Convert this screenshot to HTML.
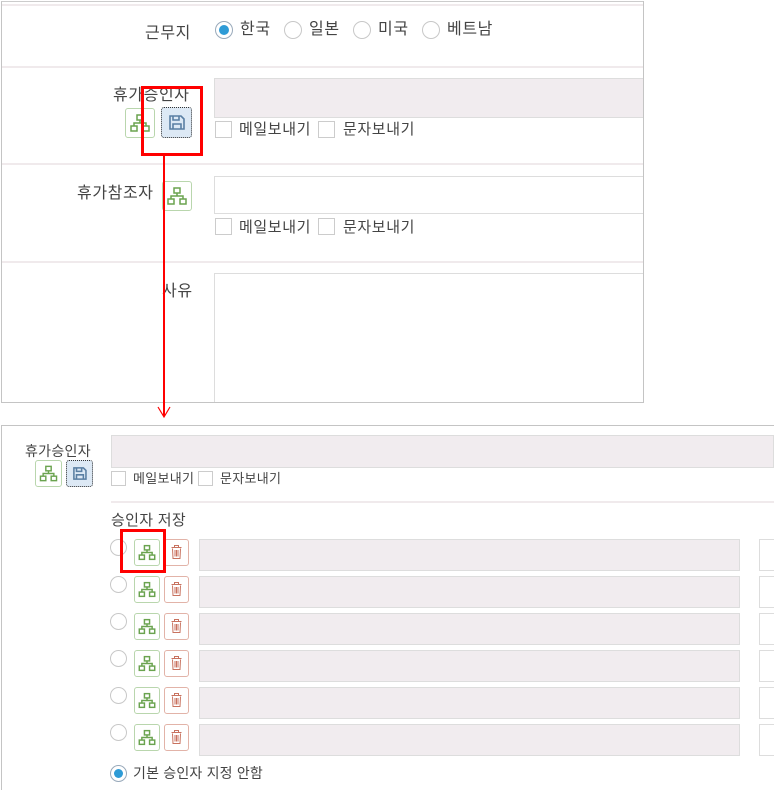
<!DOCTYPE html>
<html><head><meta charset="utf-8"><style>
*{box-sizing:border-box;margin:0;padding:0}
body{width:774px;height:790px;background:#fff;position:relative;overflow:hidden;font-family:"Liberation Sans","Noto Sans CJK KR","NanumGothic",sans-serif;color:#444}
.a{position:absolute}
.t{position:absolute;white-space:nowrap;line-height:1}
.inp{position:absolute;background:#f1ecef;border:1px solid #ddd}
.inpw{position:absolute;background:#fff;border:1px solid #ddd}
.hl{position:absolute;height:2px;background:#f0eaec}
.rad{position:absolute;border:1px solid #c8c8c8;border-radius:50%;background:#fff}
.chk{position:absolute;border:1px solid #ccc;background:#fff}
.gb{position:absolute;border:1px solid #b9d6ad;border-radius:3px;background:#fff}
.rb{position:absolute;border:1px solid #e2b3a8;border-radius:3px;background:#fff}
.sb{position:absolute;border:1px dotted #333;border-radius:3px;background:#dde9f5}
svg{position:absolute;left:0;top:0}
.f16{font-size:16px;letter-spacing:0.6px}
</style></head><body>
<div class="a" style="left:1px;top:1px;width:643px;height:402px;border:1px solid #c4c4c4;border-top:1px solid #ccc;overflow:hidden"></div>
<div class="hl" style="left:2px;top:4px;width:641px"></div>
<div class="t f16" style="left:145px;top:26px">근무지</div>
<div class="rad" style="left:215px;top:21px;width:18px;height:18px;border-color:#9ab"><div class="a" style="left:3px;top:3px;width:10px;height:10px;border-radius:50%;background:#2e9bd6"></div></div>
<div class="t f16" style="left:240px;top:22px">한국</div>
<div class="rad" style="left:284px;top:21px;width:18px;height:18px"></div>
<div class="t f16" style="left:309px;top:22px">일본</div>
<div class="rad" style="left:353px;top:21px;width:18px;height:18px"></div>
<div class="t f16" style="left:378px;top:22px">미국</div>
<div class="rad" style="left:422px;top:21px;width:18px;height:18px"></div>
<div class="t f16" style="left:447px;top:22px">베트남</div>
<div class="hl" style="left:2px;top:66px;width:641px"></div>
<div class="t f16" style="left:113px;top:88px">휴가승인자</div>
<div class="inp" style="left:214px;top:78px;width:430px;height:40px"></div>
<div class="gb" style="left:125px;top:108px;width:30px;height:30px"><svg width="28" height="28" viewBox="0 0 28 28"><g fill="none" stroke="#6aa34f" stroke-width="1.5"><rect x="11" y="6" width="6" height="5"/><path d="M14 11v3M8 17v-3h12v3"/><rect x="5" y="17" width="6" height="5"/><rect x="17" y="17" width="6" height="5"/></g></svg></div>
<div class="sb" style="left:161px;top:107px;width:31px;height:31px"><svg width="29" height="29" viewBox="0 0 29 29"><g fill="none" stroke="#5a7fa3" stroke-width="1.6"><path d="M8 8h11l3 3v10H8z"/><path d="M11 8v4h6V8M11 21v-5h8v5"/></g></svg></div>
<div class="chk" style="left:215px;top:121px;width:17px;height:17px"></div>
<div class="t f16" style="left:239px;top:122px;font-size:15px">메일보내기</div>
<div class="chk" style="left:318px;top:121px;width:17px;height:17px"></div>
<div class="t f16" style="left:343px;top:122px;font-size:15px">문자보내기</div>
<div class="hl" style="left:2px;top:163px;width:641px"></div>
<div class="t f16" style="left:77px;top:186px">휴가참조자</div>
<div class="gb" style="left:162px;top:181px;width:30px;height:30px"><svg width="28" height="28" viewBox="0 0 28 28"><g fill="none" stroke="#6aa34f" stroke-width="1.5"><rect x="11" y="6" width="6" height="5"/><path d="M14 11v3M8 17v-3h12v3"/><rect x="5" y="17" width="6" height="5"/><rect x="17" y="17" width="6" height="5"/></g></svg></div>
<div class="inpw" style="left:214px;top:176px;width:430px;height:38px"></div>
<div class="chk" style="left:215px;top:218px;width:17px;height:17px"></div>
<div class="t f16" style="left:239px;top:220px;font-size:15px">메일보내기</div>
<div class="chk" style="left:318px;top:218px;width:17px;height:17px"></div>
<div class="t f16" style="left:343px;top:220px;font-size:15px">문자보내기</div>
<div class="hl" style="left:2px;top:261px;width:641px"></div>
<div class="t f16" style="left:162px;top:284px">사유</div>
<div class="inpw" style="left:214px;top:273px;width:430px;height:130px"></div>
<div class="a" style="left:1px;top:402px;width:643px;height:1px;background:#c4c4c4"></div>
<div class="a" style="left:643px;top:1px;width:1px;height:402px;background:#c4c4c4"></div>
<div class="a" style="left:141px;top:86px;width:62px;height:70px;border:3px solid #f00"></div>
<div class="a" style="left:163px;top:156px;width:2px;height:260px;background:#f00"></div>
<svg class="a" style="left:156px;top:405px" width="16" height="14"><path d="M2 2l6 10 6-10" fill="none" stroke="#f00" stroke-width="1.2"/></svg>
<div class="a" style="left:1px;top:425px;width:773px;height:1px;background:#c4c4c4"></div>
<div class="a" style="left:1px;top:425px;width:1px;height:365px;background:#c4c4c4"></div>
<div class="t" style="left:25px;top:444px;font-size:14px;letter-spacing:0.3px">휴가승인자</div>
<div class="gb" style="left:35px;top:460px;width:27px;height:27px"><svg width="25" height="25" viewBox="0 0 28 28"><g fill="none" stroke="#6aa34f" stroke-width="1.6"><rect x="11" y="6" width="6" height="5"/><path d="M14 11v3M8 17v-3h12v3"/><rect x="5" y="17" width="6" height="5"/><rect x="17" y="17" width="6" height="5"/></g></svg></div>
<div class="sb" style="left:66px;top:460px;width:27px;height:27px"><svg width="25" height="25" viewBox="0 0 29 29"><g fill="none" stroke="#5a7fa3" stroke-width="1.8"><path d="M8 8h11l3 3v10H8z"/><path d="M11 8v4h6V8M11 21v-5h8v5"/></g></svg></div>
<div class="inp" style="left:111px;top:435px;width:663px;height:33px"></div>
<div class="chk" style="left:111px;top:471px;width:15px;height:15px"></div>
<div class="t" style="left:133px;top:472px;font-size:13px;letter-spacing:0.3px">메일보내기</div>
<div class="chk" style="left:198px;top:471px;width:15px;height:15px"></div>
<div class="t" style="left:220px;top:472px;font-size:13px;letter-spacing:0.3px">문자보내기</div>
<div class="hl" style="left:111px;top:501px;width:663px"></div>
<div class="t" style="left:111px;top:513px;font-size:15px;letter-spacing:0.3px">승인자 저장</div>
<div id="rows"></div>
<script>
var h='';for(var i=0;i<6;i++){var y=539+i*37;
h+='<div class="rad" style="left:110px;top:'+(y)+'px;width:17px;height:17px"></div>';
h+='<div class="gb" style="left:134px;top:'+y+'px;width:26px;height:27px"><svg width="24" height="25" viewBox="0 0 28 28"><g fill="none" stroke="#6aa34f" stroke-width="1.7"><rect x="11" y="6" width="6" height="5"/><path d="M14 11v3M8 17v-3h12v3"/><rect x="5" y="17" width="6" height="5"/><rect x="17" y="17" width="6" height="5"/></g></svg></div>';
h+='<div class="rb" style="left:164px;top:'+y+'px;width:25px;height:27px"><svg width="23" height="25" viewBox="0 0 23 25"><g fill="none" stroke="#c8725f" stroke-width="1"><path d="M6.5 7.5h10M9.5 7.5V5.5h4v2M7.5 8.5l0.5 10h7l0.5-10M10 10v6.5M11.5 10v6.5M13 10v6.5"/></g></svg></div>';
h+='<div class="inp" style="left:199px;top:'+y+'px;width:541px;height:32px"></div>';
h+='<div class="inpw" style="left:759px;top:'+y+'px;width:20px;height:32px"></div>';}
document.getElementById('rows').outerHTML=h;
</script>
<div class="a" style="left:120px;top:529px;width:46px;height:44px;border:3px solid #f00"></div>
<div class="rad" style="left:110px;top:765px;width:17px;height:17px;border-color:#9ab"><div class="a" style="left:3px;top:3px;width:9px;height:9px;border-radius:50%;background:#2e9bd6"></div></div>
<div class="t" style="left:133px;top:766px;font-size:14px;letter-spacing:0.2px">기본 승인자 지정 안함</div>
</body></html>
